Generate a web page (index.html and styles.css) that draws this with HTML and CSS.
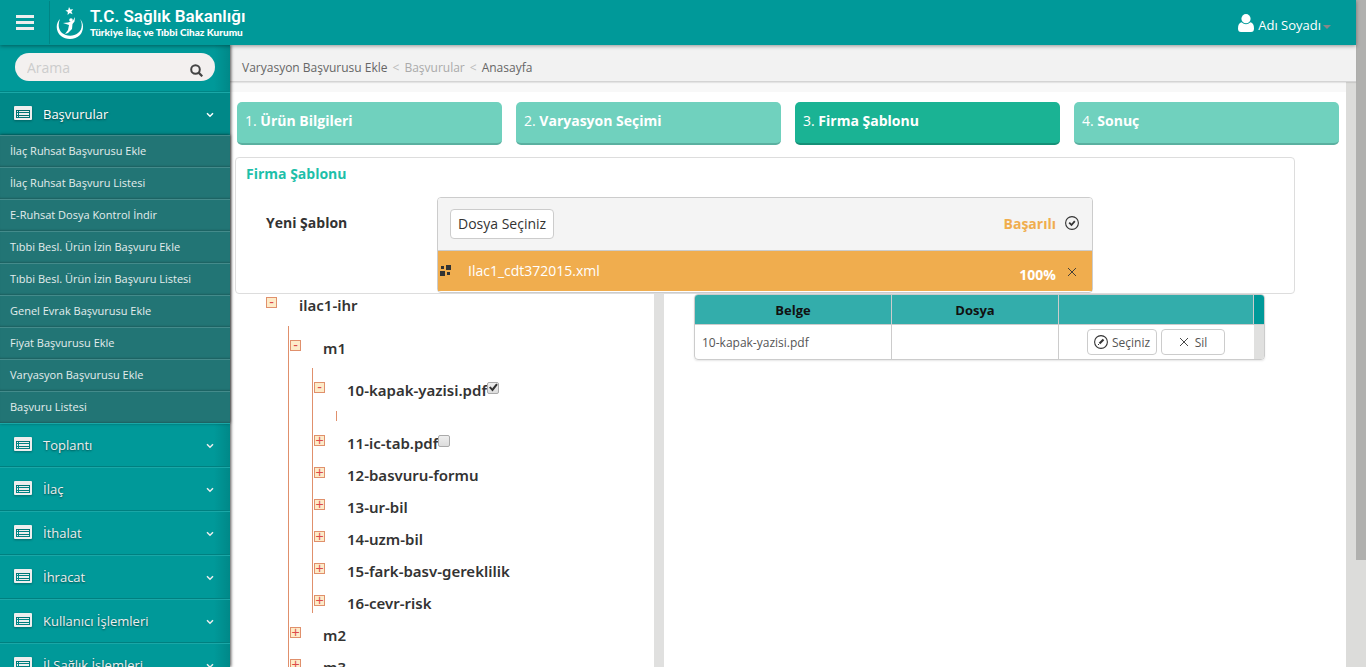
FILE: index.html
```html
<!DOCTYPE html>
<html lang="tr">
<head>
<meta charset="utf-8">
<title>Varyasyon Başvurusu Ekle</title>
<link rel="stylesheet" href="styles.css">
</head>
<body>
<svg class="sprite" aria-hidden="true">
  <symbol id="i-list" viewBox="0 0 18 14">
    <path fill="currentColor" fill-rule="evenodd" d="M1 0H17Q18 0 18 1V13Q18 14 17 14H1Q0 14 0 13V1Q0 0 1 0ZM2 4V12H16V4Z"/>
    <path fill="currentColor" d="M3 5H4V6H3ZM5 5H15V6H5ZM3 7H4V9H3ZM5 7H15V9H5ZM3 10H4V11H3ZM5 10H15V11H5Z"/>
  </symbol>
  <symbol id="i-down" viewBox="0 0 8 6"><path d="M1 1.2L4 4.2L7 1.2" fill="none" stroke="currentColor" stroke-width="1.5"/></symbol>
  <symbol id="i-close" viewBox="0 0 10 10"><path d="M1 1L9 9M9 1L1 9" fill="none" stroke="currentColor" stroke-width="0.9"/></symbol>
</svg>
<div class="page">
  <div class="app">
    <header class="topbar">
      <button class="burger" aria-label="Menü"><span></span><span></span><span></span></button>
      <a class="brand" href="#">
        <svg width="28" height="34" viewBox="0 0 28 34" aria-hidden="true">
          <path fill="#fff" d="M4 13C-1 18 0 26 5 30C10 34 19 34 24 29C28 24 28 17 24 13C27 18 26 24 22 27C17 31 10 30 6 27C2 23 2 18 4 13Z"/>
          <path fill="#fff" d="M13 1L14.3 3.600L17.2 3.2L15.3 5.500L16.6 8.2L13.8 7.1L11.6 9L11.8 6L9.4 4.6L12.2 3.900Z"/>
          <circle cx="15" cy="14" r="1.800" fill="#fff"/>
          <path fill="#fff" d="M7 17L12 16.5L17 14.500L19 11L18.500 15.500L16.500 18L16 23L12 27L9 28L12 24L13 19Z"/>
        </svg>
        <span class="brand-text"><strong>T.C. Sağlık Bakanlığı</strong><small>Türkiye İlaç ve Tıbbi Cihaz Kurumu</small></span>
      </a>
      <button class="user">
        <svg width="16" height="18" viewBox="0 0 16 18" aria-hidden="true"><circle cx="8" cy="4.700" r="4.600" fill="#fff"/><path fill="#fff" d="M3.500 8.300Q8 12 12.500 8.300Q16 9 16 14.500Q16 18 13 18H3Q0 18 0 14.500Q0 9 3.500 8.300Z"/></svg>
        <span>Adı Soyadı</span><i class="caret"></i>
      </button>
    </header>
    <div class="body">
      <nav class="sidebar">
        <form class="search">
          <div class="search-box">
            <input type="text" placeholder="Arama" aria-label="Arama">
            <button type="button" aria-label="Ara"><svg width="13" height="13" viewBox="0 0 13 13"><circle cx="5.500" cy="5.500" r="4.300" fill="none" stroke="#444" stroke-width="2"/><path d="M8.600 8.600L12.300 12.300" stroke="#444" stroke-width="2.200"/></svg></button>
          </div>
        </form>
        <a class="item active" href="#"><svg class="list"><use href="#i-list"/></svg><span>Başvurular</span><svg class="down"><use href="#i-down"/></svg></a>
        <div class="submenu">
          <a href="#">İlaç Ruhsat Başvurusu Ekle</a>
          <a href="#">İlaç Ruhsat Başvuru Listesi</a>
          <a href="#">E-Ruhsat Dosya Kontrol İndir</a>
          <a href="#">Tıbbi Besl. Ürün İzin Başvuru Ekle</a>
          <a href="#">Tıbbi Besl. Ürün İzin Başvuru Listesi</a>
          <a href="#">Genel Evrak Başvurusu Ekle</a>
          <a href="#">Fiyat Başvurusu Ekle</a>
          <a href="#">Varyasyon Başvurusu Ekle</a>
          <a href="#">Başvuru Listesi</a>
        </div>
        <a class="item" href="#"><svg class="list"><use href="#i-list"/></svg><span>Toplantı</span><svg class="down"><use href="#i-down"/></svg></a>
        <a class="item" href="#"><svg class="list"><use href="#i-list"/></svg><span>İlaç</span><svg class="down"><use href="#i-down"/></svg></a>
        <a class="item" href="#"><svg class="list"><use href="#i-list"/></svg><span>İthalat</span><svg class="down"><use href="#i-down"/></svg></a>
        <a class="item" href="#"><svg class="list"><use href="#i-list"/></svg><span>İhracat</span><svg class="down"><use href="#i-down"/></svg></a>
        <a class="item" href="#"><svg class="list"><use href="#i-list"/></svg><span>Kullanıcı İşlemleri</span><svg class="down"><use href="#i-down"/></svg></a>
        <a class="item" href="#"><svg class="list"><use href="#i-list"/></svg><span>İl Sağlık İşlemleri</span><svg class="down"><use href="#i-down"/></svg></a>
      </nav>
      <main class="main">
        <div class="crumbs"><a href="#">Varyasyon Başvurusu Ekle</a><i>&lt;</i><a class="muted" href="#">Başvurular</a><i>&lt;</i><a href="#">Anasayfa</a></div>
        <div class="scroller">
          <div class="content">
            <div class="steps">
              <button>1. <b>Ürün Bilgileri</b></button>
              <button>2. <b>Varyasyon Seçimi</b></button>
              <button class="current">3. <b>Firma Şablonu</b></button>
              <button>4. <b>Sonuç</b></button>
            </div>
            <section class="panel">
              <h2>Firma Şablonu</h2>
              <div class="field">
                <span class="field-label" id="tpl">Yeni Şablon</span>
                <div class="upload" role="group" aria-labelledby="tpl">
                  <div class="upload-head">
                    <button class="pick">Dosya Seçiniz</button>
                    <span class="status">Başarılı</span>
                    <svg width="14" height="14" viewBox="0 0 14 14" aria-hidden="true"><circle cx="7" cy="7" r="6.400" fill="none" stroke="#333" stroke-width="1.100"/><path d="M4.200 6.700L6.500 9L9.800 5.200" fill="none" stroke="#333" stroke-width="1.800"/></svg>
                  </div>
                  <div class="upload-file">
                    <svg width="12" height="12" viewBox="0 0 12 12" aria-hidden="true"><path fill="#333" d="M1 2H4V5H1ZM6 1H11V6H6ZM0 7H5V12H0ZM7 8H10V11H7Z"/></svg>
                    <span class="file-name">Ilac1_cdt372015.xml</span>
                    <b>100%</b>
                    <button class="remove" aria-label="Kaldır"><svg width="10" height="10"><use href="#i-close"/></svg></button>
                  </div>
                </div>
              </div>
            </section>
            <div class="split">
              <div class="tree">
                <div class="node root"><button>-</button><span>ilac1-ihr</span></div>
                <div class="branch">
                  <div class="node"><button>-</button><span>m1</span></div>
                  <div class="branch">
                    <div class="node"><button>-</button><label for="f10">10-kapak-yazisi.pdf</label><input type="checkbox" id="f10" checked></div>
                    <div class="branch empty"></div>
                    <div class="node"><button>+</button><label for="f11">11-ic-tab.pdf</label><input type="checkbox" id="f11"></div>
                    <div class="node"><button>+</button><span>12-basvuru-formu</span></div>
                    <div class="node"><button>+</button><span>13-ur-bil</span></div>
                    <div class="node"><button>+</button><span>14-uzm-bil</span></div>
                    <div class="node"><button>+</button><span>15-fark-basv-gereklilik</span></div>
                    <div class="node"><button>+</button><span>16-cevr-risk</span></div>
                  </div>
                  <div class="node"><button>+</button><span>m2</span></div>
                  <div class="node"><button>+</button><span>m3</span></div>
                </div>
              </div>
              <div class="divider"></div>
              <div class="docs">
                <table>
                  <colgroup><col class="c1"><col class="c2"><col class="c3"><col class="c4"></colgroup>
                  <thead><tr><th>Belge</th><th>Dosya</th><th></th><th class="gutter"></th></tr></thead>
                  <tbody><tr><td>10-kapak-yazisi.pdf</td><td></td><td><div class="actions">
                    <button><svg width="14" height="14" viewBox="0 0 14 14" aria-hidden="true"><circle cx="7" cy="7" r="6.400" fill="none" stroke="#333" stroke-width="1.100"/><path d="M5.500 8.500L9.500 4.500" stroke="#333" stroke-width="2.200"/><path fill="#333" d="M4 9H5V10H4Z"/></svg>Seçiniz</button>
                    <button class="del"><svg width="10" height="10" aria-hidden="true"><use href="#i-close"/></svg>Sil</button>
                  </div></td><td class="gutter"></td></tr></tbody>
                </table>
              </div>
            </div>
          </div>
          <div class="inner-track"></div>
        </div>
      </main>
    </div>
  </div>
  <div class="page-track"><div class="thumb"></div></div>
</div>
</body>
</html>
```
FILE: styles.css
```css
* { box-sizing: border-box; }
body { margin: 0; font-family: "Open Sans", sans-serif; font-size: 14px; color: #333; background: #fff; }
a { color: inherit; text-decoration: none; }
button { font: inherit; color: inherit; margin: 0; padding: 0; border: 0; background: none; cursor: pointer; }
.sprite { display: none; }
.page { display: flex; height: 100vh; overflow: hidden; }
.app { flex: 1; min-width: 0; display: flex; flex-direction: column; }
.page-track { flex: none; width: 10px; background: #dcdcda; }
.thumb { height: 84%; background: #b0b0ae; }

/* Top bar */
.topbar { flex: none; height: 45px; display: flex; align-items: center; background: #009999; color: #fff; position: relative; z-index: 3; box-shadow: 0 1px 4px rgba(0,0,0,.4); padding-right: 25px; }
.burger { width: 50px; height: 43px; padding: 0 15px 0 16px; display: flex; flex-direction: column; justify-content: center; gap: 3px; border-right: 1px solid #008585; }
.burger span { height: 3px; background: #eee; }
.brand { display: flex; align-items: center; gap: 6px; padding-left: 6px; }
.brand-text { display: flex; flex-direction: column; font-family: Roboto, sans-serif; }
.brand-text strong { font-size: 17px; line-height: 18px; font-weight: 600; }
.brand-text small { font-family: Lato, sans-serif; font-size: 10px; line-height: 14px; font-weight: 900; }
.user { margin-left: auto; display: flex; align-items: center; gap: 4px; font-size: 13px; line-height: 18px; }
.user span { padding-top: 4px; }
.caret { border: 4px solid transparent; border-top-color: #888; border-bottom: 0; margin-left: -2px; margin-top: 8px; }

/* Sidebar */
.body { flex: 1; min-height: 0; display: flex; }
.sidebar { flex: none; width: 230px; overflow: clip; overflow-clip-margin: 5px; position: relative; z-index: 2; background: linear-gradient(to right, transparent 214px, #008888), #009999; box-shadow: 1px 0 3px rgba(0,0,0,.7); }
.search { padding: 8px 15px 10px; border-bottom: 1px solid #008585; }
.search-box { display: flex; align-items: center; height: 28px; border-radius: 14px; background: #f3f0ef; padding: 0 12px; }
.search-box input { flex: 1; min-width: 0; border: 0; padding: 0; background: none; outline: 0; font: inherit; color: #444; }
.search-box input::placeholder { color: #ccc; }
.search-box button { height: 13px; margin-top: 6px; line-height: 0; }
.item { display: flex; align-items: center; height: 44px; padding: 0 16px 0 14px; border-top: 1px solid #1aa7a7; border-bottom: 1px solid #008080; color: #eee; font-size: 13px; text-shadow: 0 1px 2px rgba(0,0,0,.5); }
.item .list { width: 18px; height: 14px; margin: 0 11px 3px 0; color: #eee; filter: drop-shadow(0 1px 1px rgba(0,0,0,.3)); }
.item .down { width: 8px; height: 6px; margin-left: auto; margin-top: 2px; }
.item.active { height: 43px; border-bottom: 0; background: #008888; color: #fff; }
.submenu { background: #227575; box-shadow: 0 0 3px rgba(0,0,0,.7); }
.submenu a { display: block; height: 32px; line-height: 30px; padding-left: 10px; font-size: 11px; color: #e4eded; border-top: 1px solid #448b8b; box-shadow: inset 0 -2px 2px -1px rgba(0,0,0,.2); }

/* Main */
.main { flex: 1; min-width: 0; display: flex; flex-direction: column; }
.crumbs { flex: none; display: flex; align-items: center; gap: 5px; height: 37px; padding: 8px 12px 0; background: #f2f2f2; border-bottom: 1px solid #d4d4d4; box-shadow: 0 1px 1px rgba(0,0,0,.08); font-size: 12px; color: #666; z-index: 1; }
.crumbs i { font-style: normal; color: #bbb; }
.crumbs .muted { color: #aaa; }
.scroller { flex: 1; min-height: 0; display: flex; }
.content { flex: 1; min-width: 0; display: flex; flex-direction: column; overflow: hidden; border-top: 10px solid #f8f8f8; }
.inner-track { flex: none; width: 10px; background: #dcdcda; }
.steps { display: grid; grid-template-columns: repeat(4, 1fr); gap: 14px; padding: 10px 7px 12px; }
.steps button { height: 43px; text-align: left; padding: 0 8px 5px; color: #fff; background: #70d1be; border-bottom: 2px solid #5ab0a0; border-radius: 5px; }
.steps .current { background: #1ab394; border-color: #159077; }
.panel { flex: none; margin: 0 51px 0 5px; border: 1px solid #ddd; border-radius: 4px; padding: 6px 10px 0; }
.panel h2 { margin: 0; font-size: 14px; line-height: 19px; color: #1dc0a9; }
.field { display: flex; padding: 14px 0 0 20px; }
.field-label { flex: none; width: 171px; font-weight: 700; line-height: 52px; }
.upload { width: 656px; border: 1px solid #ccc; border-radius: 4px; padding-bottom: 1px; }
.upload-head { display: flex; align-items: center; height: 53px; padding: 0 13px 0 12px; background: #f4f4f4; border-bottom: 1px solid #ccc; border-radius: 3px 3px 0 0; }
.pick { height: 30px; padding: 0 7px 2px; background: #fff; border: 1px solid #ccc; border-radius: 4px; }
.status { margin: 0 9px 2px auto; font-weight: 700; color: #f0ad4e; }
.upload-head svg { margin-bottom: 2px; }
.upload-file { display: flex; align-items: center; height: 40px; padding: 0 15px 0 2px; background: #f0ad4e; color: #fff; }
.upload-file svg { margin-bottom: 2px; }
.file-name { margin: 0 0 2px 16px; }
.upload-file b { margin: 6px 11px 0 auto; }
.remove { color: #333; line-height: 0; margin-top: 4px; }

/* Document tree */
.split { flex: 1; min-height: 0; display: flex; }
.tree { flex: none; width: 424px; padding-left: 36px; overflow: hidden; font-family: "Trebuchet MS", "Noto Sans", sans-serif; font-size: 15px; font-weight: 600; }
.node { display: flex; align-items: flex-end; height: 32px; }
.node.root { height: 21px; }
.node button { flex: none; width: 11px; height: 11px; margin: 0 22px 7px 0; border: 1px solid #e0906c; background: #fdebc8; color: #dd4b4b; font: 400 14px/9px "Liberation Sans", sans-serif; }
.node span, .node label { line-height: 20px; }
.branch { margin: 11px 0 0 22px; padding-left: 1px; border-left: 1px solid #e0906c; }
.branch .branch { margin-top: 10px; }
.branch .branch.empty { height: 10px; margin-top: 11px; }
.node input { appearance: none; width: 12px; height: 12px; margin: 0 0 6px; border: 1px solid #aaa; border-radius: 2px; background: linear-gradient(#eee, #ddd); }
.node input:checked::before { content: ""; display: block; width: 10px; height: 9px; background: #333; clip-path: polygon(10% 50%, 28% 38%, 42% 60%, 82% 5%, 98% 20%, 46% 95%); }
.divider { flex: none; width: 10px; background: #e0e0df; }

/* Documents table */
.docs { flex: none; width: 601px; padding-left: 30px; }
.docs table { width: 100%; table-layout: fixed; border-collapse: separate; border-spacing: 0; border: 1px solid #ccc; border-radius: 4px; overflow: hidden; font-size: 12px; box-shadow: 0 1px 2px rgba(0,0,0,.1); }
.c1 { width: 197px; }
.c2 { width: 167px; }
.c4 { width: 10px; }
.docs th { height: 30px; padding: 0; background: #33adab; border-bottom: 1px solid #ccc; border-right: 1px solid #ccc; font-size: 13px; font-weight: 700; color: #111; }
.docs td { height: 34px; padding: 0 7px; border-right: 1px solid #ccc; color: #555; }
.docs th.gutter { background: #009999; border-right: 0; }
.docs td:nth-child(3) { border-right: 0; }
.docs td.gutter { padding: 0; background: #e0e0df; border-right: 0; }
.actions { display: flex; justify-content: flex-end; gap: 4px; padding-right: 22px; }
.actions button { display: flex; align-items: center; justify-content: center; gap: 4px; width: 70px; height: 26px; background: #fff; border: 1px solid #ccc; border-radius: 4px; }
.actions .del { width: 64px; gap: 6px; }
.actions svg { color: #333; flex: none; }
```
